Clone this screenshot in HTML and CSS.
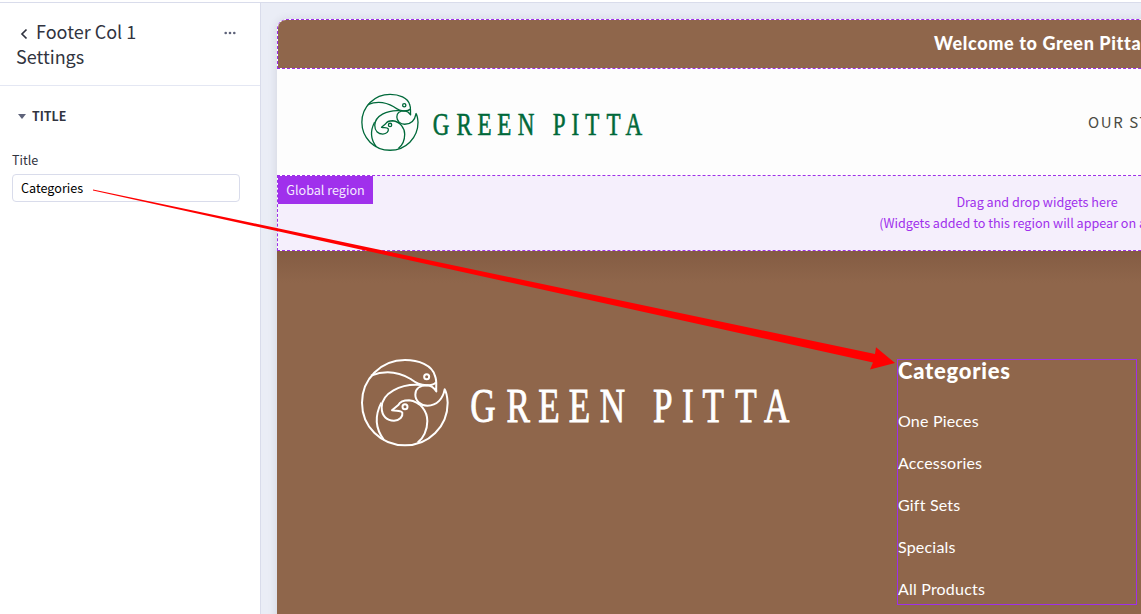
FILE: index.html
```html
<!DOCTYPE html>
<html lang="en">
<head>
<meta charset="utf-8">
<title>Footer Col 1 Settings</title>
<link rel="stylesheet" href="styles.css">
</head>
<body>
<svg class="defs" aria-hidden="true">
  <symbol id="logo" viewBox="0 0 430 90">
    <g transform="translate(-10 -8) scale(.33333)" fill="none" stroke="currentColor" stroke-width="6" stroke-linejoin="round">
      <path d="M259 124C257 110 262 94 255 78C247 45 205 30 165 30C93 30 36 87 36 158C36 230 93 286 165 286C236 286 293 230 293 158C292 143 290 128 284 118C279 145 262 167 232 167C212 167 196 152 196 134C196 115 212 106 232 106C244 107 252 114 259 124Z"/>
      <path d="M63 77C110 58 150 68 182 87C198 98 208 106 230 106Q250 106 258 97"/>
      <path d="M213 105C150 100 95 130 95 172C95 200 112 212 132 212C150 211 159 200 157 188C152 180 140 184 126 181L145 165C150 155 160 151 177 151C212 155 232 185 232 213C232 240 220 265 203 278"/>
      <path d="M94 158C75 195 75 235 102 270"/>
      <circle cx="230" cy="80" r="7.5"/>
      <circle cx="165" cy="170" r="7.5"/>
    </g>
    <g class="wordmark" transform="translate(0 63.8) scale(.74 1)">
      <text x="149 198 241 282 324 396 435 463 507 546">GREENPITTA</text>
    </g>
  </symbol>
</svg>

<div class="app">
  <aside class="sidebar">
    <header class="panel-head">
      <h1><svg class="back" viewBox="0 0 8 12"><path d="M6.5 1.5 2 6l4.5 4.5"/></svg>Footer Col 1 Settings</h1>
      <svg class="more" viewBox="0 0 12 4"><circle cx="1.7" cy="2" r="1.3"/><circle cx="6" cy="2" r="1.3"/><circle cx="10.3" cy="2" r="1.3"/></svg>
    </header>
    <h2 class="section"><i class="caret"></i>TITLE</h2>
    <div class="field">
      <label for="title">Title</label>
      <input id="title" value="Categories">
    </div>
  </aside>

  <main class="canvas">
    <div class="site">
      <div class="banner">Welcome to Green Pitta</div>
      <div class="header">
        <svg class="logo-small"><use href="#logo"/></svg>
        <nav>OUR STORY</nav>
      </div>
      <div class="region">
        <span class="tag">Global region</span>
        <p>Drag and drop widgets here<br>(Widgets added to this region will appear on all pages)</p>
      </div>
      <footer class="footer">
        <svg class="logo-large"><use href="#logo"/></svg>
        <section class="column">
          <h3>Categories</h3>
          <ul>
            <li>One Pieces</li>
            <li>Accessories</li>
            <li>Gift Sets</li>
            <li>Specials</li>
            <li>All Products</li>
          </ul>
        </section>
      </footer>
    </div>
  </main>
</div>
<svg class="arrow" viewBox="0 0 1141 614"><path d="M93 189.5 875 354 876 347.3 895 363 870 369.5 873 362.5 93 190.5Z"/></svg>
</body>
</html>
```
FILE: styles.css
```css
* { box-sizing: border-box; margin: 0; padding: 0; }
body {
  width: 1141px; height: 614px; overflow: hidden; background: #fff; color: #313440;
  font-family: "Noto Sans CJK JP", sans-serif; font-size: 12.6px;
}
.defs { position: absolute; width: 0; height: 0; }
.wordmark { font: 47.5px "Liberation Serif", serif; fill: currentColor; stroke: currentColor; stroke-width: .9; }

.app { display: flex; height: 614px; border-top: 2px solid #fff; }
.sidebar { width: 261px; border-top: 1px solid #d9dceb; border-right: 1px solid #d9dceb; }
.panel-head {
  display: flex; justify-content: space-between; height: 83px;
  padding: 16px 24px 0 16px; border-bottom: 1px solid #e4e7f3;
}
.panel-head h1 { width: 140px; font-size: 18px; font-weight: 400; line-height: 25px; }
.back { width: 8px; height: 12px; margin: 0 8px 0 4px; vertical-align: -1px; fill: none; stroke: #313440; stroke-width: 1.7; }
.more { width: 12px; height: 4px; margin-top: 12px; fill: #5e637a; }
.section { display: flex; align-items: center; height: 20px; margin: 20px 0 0 18px; font-size: 12.4px; font-weight: 700; }
.caret { width: 8px; margin-right: 6px; border: 4px solid transparent; border-top: 5px solid #5e637a; border-bottom: 0; }
.field { padding: 24px 20px 0 12px; }
.field label { display: block; line-height: 20px; }
.field input {
  display: block; width: 228px; height: 28px; margin-top: 4px; padding: 0 8px 2px;
  border: 1px solid #d9dceb; border-radius: 4px; font: inherit; color: #000;
}

.canvas { flex: 1; min-width: 0; overflow: hidden; padding: 16px 0 0 16px; background: #eaedf6; border-top: 1px solid #d9dceb; }
.site {
  width: 1600px; height: 620px; border-radius: 9px 0 0; overflow: hidden; background: #fff;
  box-shadow: 0 1px 10px rgba(49, 52, 64, .14);
}
.banner {
  height: 50px; padding-left: 656px; border: 1px dashed #9e30e8; border-radius: 9px 0 0;
  background: #8f664b padding-box; color: #fff; font: 900 18px/46px Lato, sans-serif; letter-spacing: .62px;
}
.header { display: flex; align-items: flex-start; height: 106px; padding: 24px 0 0 83px; background: #fdfdfd; }
.logo-small { width: 283px; height: 59px; color: #00693a; }
.header nav { margin: 17px 0 0 445px; color: #4b4b43; font-size: 15px; line-height: 24px; letter-spacing: 1.6px; }
.region { display: flex; align-items: flex-start; height: 76px; border: 1px dashed #9e30e8; background: #f5effc padding-box; }
.tag { width: 95px; height: 28px; background: #a030ec; color: #f5e9ff; text-align: center; line-height: 27px; }
.region p { width: 520px; margin: 15px 0 0 404px; color: #a030ec; text-align: center; line-height: 21px; white-space: nowrap; }
.footer {
  display: flex; align-items: flex-start; height: 400px; padding: 108px 0 0 83px;
  background: linear-gradient(#845c43, #8f664b 32px); color: #fff;
}
.logo-large { width: 430px; height: 90px; margin-top: -1px; }
.column {
  width: 240px; height: 246px; margin-left: 107px; border: 1px solid #9e30e8; border-width: 1px 1.5px 1.5px 1px;
  font-family: Lato, sans-serif;
}
.column h3 { font-size: 22px; font-weight: 900; line-height: 22px; letter-spacing: .75px; }
.column ul { margin-top: 18px; list-style: none; }
.column li { font-size: 16px; line-height: 42px; letter-spacing: .2px; }
.arrow { position: absolute; left: 0; top: 0; width: 1141px; height: 614px; fill: #f00; pointer-events: none; }
```
